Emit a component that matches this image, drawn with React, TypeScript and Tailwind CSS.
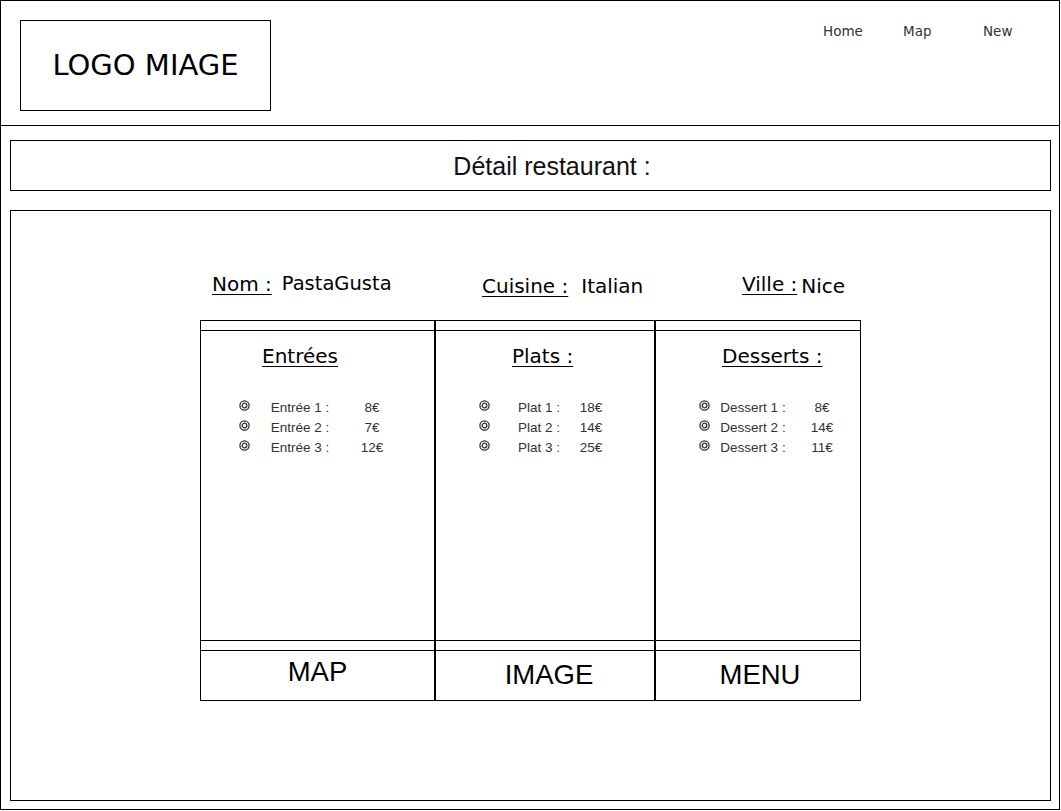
import React from "react";

const verdana = "font-['DejaVu_Sans',Verdana,sans-serif]";
const arial = "font-['Liberation_Sans',Arial,sans-serif]";

function Bullet() {
  return (
    <svg width="11" height="11" viewBox="0 0 11 11" className="mt-[2px] -ml-[1px] shrink-0">
      <circle cx="5.5" cy="5.5" r="4.6" fill="none" stroke="#333" strokeWidth="1.3" />
      <circle cx="5.5" cy="5.5" r="2.3" fill="none" stroke="#333" strokeWidth="1.3" />
    </svg>
  );
}

type Item = { label: string; price: string };

function Column({
  title,
  items,
  titlePad,
  rowPad,
  labelW,
  labelMl,
  priceW,
  priceMl,
  footer,
  footerCls,
  widthCls,
  divider,
}: {
  title: string;
  items: Item[];
  titlePad: string;
  rowPad: string;
  labelW: string;
  labelMl: string;
  priceW: string;
  priceMl: string;
  footer: string;
  footerCls: string;
  widthCls: string;
  divider: boolean;
}) {
  return (
    <div className={`flex flex-col ${widthCls} ${divider ? "border-r-2 border-black" : ""}`}>
      <div className="h-[10px] border-b border-black" />
      <div className="h-[310px] border-b border-black flex flex-col">
        <div className={`pt-[13px] ${titlePad}`}>
          <span className={`${verdana} text-[20px] leading-[24px] underline underline-offset-[3px] decoration-1 text-black`}>
            {title}
          </span>
        </div>
        <div className="mt-[29px] flex flex-col">
          {items.map((it) => (
            <div key={it.label} className={`flex items-start h-[20px] ${rowPad}`}>
              <Bullet />
              <div className={`${labelW} ${labelMl} text-center whitespace-nowrap ${arial} text-[13.5px] leading-[20px] text-[#333]`}>
                {it.label}
              </div>
              <div className={`${priceW} ${priceMl} text-center ${arial} text-[13.5px] leading-[20px] text-[#333]`}>
                {it.price}
              </div>
            </div>
          ))}
        </div>
      </div>
      <div className="h-[10px] border-b border-black" />
      <div className={`h-[49px] flex items-center justify-center ${arial} text-[27.5px] text-black ${footerCls}`}>
        {footer}
      </div>
    </div>
  );
}

export default function App() {
  return (
    <div className="w-[1061px] h-[811px] bg-white">
      <div className="w-[1060px] h-[810px] border border-black box-border flex flex-col">
        {/* Header */}
        <div className="h-[125px] border-b border-black flex justify-between shrink-0">
          <div className="ml-[19px] mt-[19px] w-[251px] h-[91px] border border-black flex items-center justify-center">
            <span className={`${verdana} text-[29px] text-black leading-none`}>LOGO MIAGE</span>
          </div>
          <nav className={`flex mt-[22px] mr-[6px] ${verdana} text-[13.5px] leading-[16px] text-[#333]`}>
            <span className="w-[80px]">Home</span>
            <span className="w-[80px]">Map</span>
            <span className="w-[70px]">New</span>
          </nav>
        </div>

        <div className="pl-[9px] pr-[8px] flex flex-col">
          {/* Title */}
          <div className="mt-[14px] h-[51px] border border-black flex items-center justify-center">
            <span className={`${arial} text-[25px] text-[#111] pt-[3px] ml-[43px]`}>Détail restaurant :</span>
          </div>

          {/* Main */}
          <div className="mt-[19px] h-[591px] border border-black flex flex-col">
            <div className={`pt-[61px] ml-[201px] flex items-start ${verdana} text-[20px] leading-[24px] text-black`}>
              <div className="w-[270px] flex">
                <span className="underline underline-offset-[3px] decoration-1">Nom :</span>
                <span className="ml-[10px] text-[19.5px]">PastaGusta</span>
              </div>
              <div className="w-[260px] flex mt-[2px]">
                <span className="underline underline-offset-[3px] decoration-1">Cuisine :</span>
                <span className="ml-[13px]">Italian</span>
              </div>
              <div className="flex">
                <span className="underline underline-offset-[3px] decoration-1">Ville :</span>
                <span className="ml-[4px] mt-[2px]">Nice</span>
              </div>
            </div>

            <div className="mt-[22px] ml-[189px] w-[661px] h-[381px] border border-black flex">
              <Column
                title="Entrées"
                items={[
                  { label: "Entrée 1 :", price: "8€" },
                  { label: "Entrée 2 :", price: "7€" },
                  { label: "Entrée 3 :", price: "12€" },
                ]}
                titlePad="pl-[61px]"
                rowPad="pl-[39px]"
                labelW="w-[80px]"
                labelMl="ml-[10px]"
                priceW="w-[40px]"
                priceMl="ml-[12px]"
                footer="MAP"
                footerCls="pb-[8px]"
                widthCls="w-[235px]"
                divider
              />
              <Column
                title="Plats :"
                items={[
                  { label: "Plat 1 :", price: "18€" },
                  { label: "Plat 2 :", price: "14€" },
                  { label: "Plat 3 :", price: "25€" },
                ]}
                titlePad="pl-[76px]"
                rowPad="pl-[44px]"
                labelW="w-[60px]"
                labelMl="ml-[19px]"
                priceW="w-[30px]"
                priceMl="ml-[7px]"
                footer="IMAGE"
                footerCls="pl-[8px] pb-[2px]"
                widthCls="w-[220px]"
                divider
              />
              <Column
                title="Desserts :"
                items={[
                  { label: "Dessert 1 :", price: "8€" },
                  { label: "Dessert 2 :", price: "14€" },
                  { label: "Dessert 3 :", price: "11€" },
                ]}
                titlePad="pl-[66px]"
                rowPad="pl-[44px]"
                labelW="w-[70px]"
                labelMl="ml-[8px]"
                priceW="w-[30px]"
                priceMl="ml-[19px]"
                footer="MENU"
                footerCls="pl-[4px] pb-[2px]"
                widthCls="w-[204px]"
                divider={false}
              />
            </div>
          </div>
        </div>
      </div>
    </div>
  );
}
